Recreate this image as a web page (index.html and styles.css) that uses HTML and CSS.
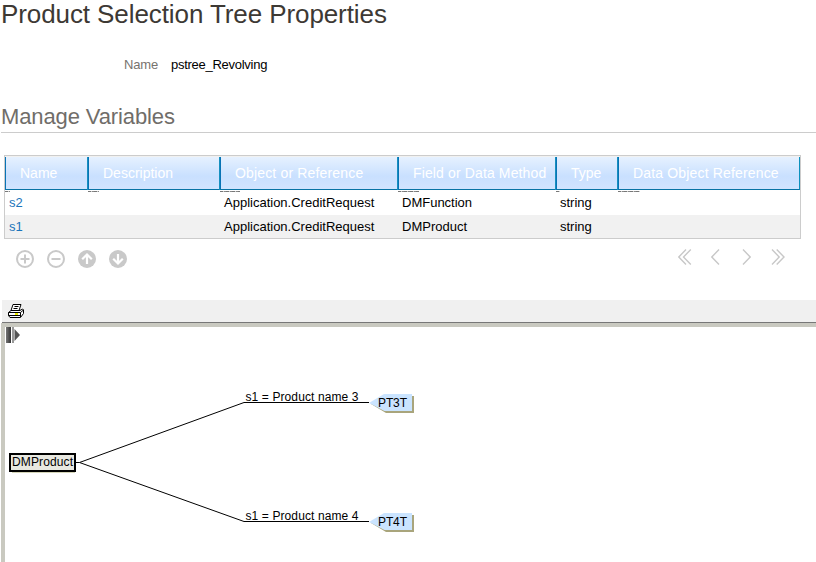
FILE: index.html
```html
<!DOCTYPE html>
<html lang="en">
<head>
<meta charset="utf-8">
<title>Product Selection Tree Properties</title>
<link rel="stylesheet" href="styles.css">
</head>
<body>
<h1 class="title"><span>Product Selection Tree Properties</span></h1>
<div class="field"><span class="field-label">Name</span><span class="field-value">pstree_Revolving</span></div>
<h2 class="section">Manage Variables</h2>
<div class="grid">
  <div class="row head">
    <div class="th">Name</div><div class="th">Description</div><div class="th object">Object or Reference</div><div class="th method">Field or Data Method</div><div class="th">Type</div><div class="th reference">Data Object Reference</div>
  </div>
  <div class="row marks">
    <div><i class="mark w5"></i></div><div><i class="mark w11"></i></div><div><i class="mark w20"></i></div><div><i class="mark w21"></i></div><div><i class="mark w4"></i></div><div><i class="mark w22"></i></div>
  </div>
  <div class="row"><div class="link">s2</div><div></div><div>Application.CreditRequest</div><div>DMFunction</div><div>string</div><div></div></div>
  <div class="row alt"><div class="link">s1</div><div></div><div>Application.CreditRequest</div><div>DMProduct</div><div>string</div><div></div></div>
</div>
<div class="actions">
  <div class="edit">
    <svg viewBox="0 0 18 18"><circle cx="9" cy="9" r="8"/><path d="M9 4.500v9M4.500 9h9"/></svg>
    <svg viewBox="0 0 18 18"><circle cx="9" cy="9" r="8"/><path d="M4.500 9h9"/></svg>
    <svg viewBox="0 0 18 18"><circle class="solid" cx="9" cy="9" r="9"/><path class="light" d="M9 14V5M4.200 9.300L9 4.500L13.800 9.300"/></svg>
    <svg viewBox="0 0 18 18"><circle class="solid" cx="9" cy="9" r="9"/><path class="light" d="M9 4V13M4.200 8.700L9 13.500L13.800 8.700"/></svg>
  </div>
  <div class="pager">
    <svg class="wide" viewBox="0 0 14 16"><path d="M8 .5L.8 8L8 15.500M12.800 .5L5.500 8L12.800 15.500"/></svg>
    <svg viewBox="0 0 9 16"><path d="M8 .5L.8 8L8 15.500"/></svg>
    <svg viewBox="0 0 9 16"><path d="M1 .5L8.200 8L1 15.500"/></svg>
    <svg class="wide" viewBox="0 0 14 16"><path d="M1 .5L8.200 8L1 15.500M5.700 .5L13 8L5.700 15.500"/></svg>
  </div>
</div>
<div class="toolbar">
  <svg class="printer" viewBox="0 0 16 14">
    <path d="M5 .5H13L11 6.500H3Z" fill="#fff" stroke="#000"/>
    <path d="M6.500 2.500h4M5.500 4.500h4" stroke="#000" fill="none"/>
    <path d="M.5 8.500L3 6.500H12L14.500 5L15.500 6V9.500L12.500 13.500H2L.5 11.500Z" fill="#fff" stroke="#000"/>
    <path d="M.5 8.500H12.500V13M12.500 8.500L15.500 6M.5 11.500H12.500" fill="none" stroke="#000"/>
    <path d="M7 10h3" stroke="#ee0" stroke-width="2"/>
  </svg>
</div>
<div class="canvas">
  <svg class="tree" viewBox="0 0 811 235">
    <defs><linearGradient id="bar"><stop offset="0" stop-color="#777"/><stop offset="1" stop-color="#333"/></linearGradient></defs>
    <g shape-rendering="crispEdges"><path d="M1 0h5v16H1z" fill="url(#bar)"/><path d="M7 0h2v16H7z" fill="#999"/></g>
    <path d="M9.500 2L15 8L9.500 14Z" fill="#555"/>
    <path d="M70 135.500H74.500L239 75.500H364M74.500 135.500L239 194.500H364" fill="none" stroke="#000"/>
    <path d="M7 144h63v2H7z" fill="#d5d5b8"/>
    <path d="M5 127h65v17H5z" fill="#e8e8e0" stroke="#000" stroke-width="2"/>
    <g id="leaf"><path d="M366 77L381 69H409V86H381Z" fill="#a9a57c"/><path d="M364 76L379 67H407V84H379.500Z" fill="#cae4ff"/></g>
    <use href="#leaf" y="119"/>
    <g class="labels"><text x="7" y="139" textLength="61">DMProduct</text><text x="240.500" y="74" textLength="113">s1 = Product name 3</text><text x="240.500" y="193" textLength="113">s1 = Product name 4</text><text x="373" y="80" textLength="29">PT3T</text><text x="373" y="199" textLength="29">PT4T</text></g>
  </svg>
</div>
</body>
</html>
```
FILE: styles.css
```css
* { box-sizing: border-box; }
body { margin: 0; height: 562px; overflow: hidden; background: #fff; color: #000; font: 13px "Liberation Sans", Arial, sans-serif; display: flex; flex-direction: column; }
h1, h2 { margin: 0; font-weight: normal; }
.title { height: 50px; padding-left: 1px; font-size: 26px; line-height: 29px; color: #3d3934; letter-spacing: -.09px; }
.field { height: 50px; display: flex; line-height: 30px; }
.field-label { width: 158px; text-align: right; color: #77736e; letter-spacing: -.15px; }
.field-value { margin-left: 13px; letter-spacing: -.27px; }
.section { height: 33px; margin-left: 1px; border-bottom: 1px solid #ccc; font-size: 22px; line-height: 33px; color: #706d69; letter-spacing: -.12px; }
.grid { width: 797px; height: 84px; margin: 22px 0 0 4px; border: 1px solid #ccc; }
.row { display: grid; grid-template-columns: 83px 132px 178px 158px 62px 182px; height: 24px; line-height: 24px; }
.row > div { padding-left: 4px; white-space: nowrap; }
.row .link { color: #1b75bb; }
.head { height: 34px; padding-top: 1px; background: #f1f1f0; }
.row .th { height: 33px; padding-left: 14px; line-height: 33px; font-size: 14px; color: #fff; background: linear-gradient(#e6f1ff, #c9e0ff 60%, #d1e4ff); border-left: 1px solid #0873b5; border-bottom: 1px solid #0873a5; }
.row .th + .th { box-shadow: -1px 0 #1690c0; }
.row .object { letter-spacing: .16px; }
.row .method { letter-spacing: .13px; }
.row .reference { letter-spacing: .16px; }
.row .th:last-child { border-right: 1px solid #0b91bd; }
.marks { height: 1px; }
.row.marks > div { padding-left: 0; }
.mark { display: block; height: 1px; margin: 1px 0 0; background: repeating-linear-gradient(90deg, #777 0 3px, #ccc 3px 4px, #888 4px 6px); }
.w4 { width: 4px; }
.w5 { width: 5px; }
.w11 { width: 11px; }
.w20 { width: 20px; }
.w21 { width: 21px; }
.w22 { width: 22px; }
.alt { height: 23px; background: #f1f1f1; }
.actions { height: 61px; padding: 11px 31px 0 16px; display: flex; justify-content: space-between; }
.edit { display: flex; gap: 13px; }
.edit svg { width: 18px; height: 18px; fill: none; stroke: #c9c9c9; stroke-width: 2; }
.edit .solid { fill: #c9c9c9; stroke: none; }
.edit .light { stroke: #fff; stroke-width: 2.2; }
.pager { display: flex; gap: 20px; margin-top: -1px; }
.pager svg { width: 9px; height: 16px; fill: none; stroke: #c8c8c8; stroke-width: 1.4; }
.pager svg:nth-child(2) { margin: 0 2px 0 -1px; }
.pager .wide { width: 14px; }
.toolbar { height: 23px; margin-left: 2px; padding: 4px 0 0 6px; background: #f0f0f0; border-bottom: 1px solid #777; }
.printer { display: block; width: 16px; height: 14px; }
.canvas { margin-left: 1px; height: 239px; border-top: 4px solid #c9c9c0; border-left: 4px solid #c9c9c0; }
.tree { display: block; width: 811px; height: 235px; }
.labels { font-size: 12px; fill: #000; }
```
